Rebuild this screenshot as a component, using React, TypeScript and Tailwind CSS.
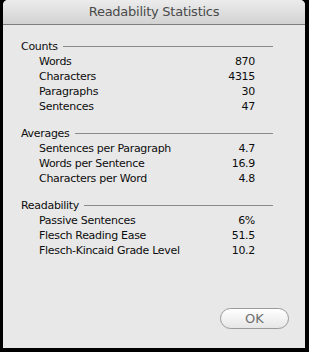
import React from 'react';

type Row = { label: string; value: string };

const sections: { title: string; rows: Row[] }[] = [
    {
        title: 'Counts',
        rows: [
            { label: 'Words', value: '870' },
            { label: 'Characters', value: '4315' },
            { label: 'Paragraphs', value: '30' },
            { label: 'Sentences', value: '47' },
        ],
    },
    {
        title: 'Averages',
        rows: [
            { label: 'Sentences per Paragraph', value: '4.7' },
            { label: 'Words per Sentence', value: '16.9' },
            { label: 'Characters per Word', value: '4.8' },
        ],
    },
    {
        title: 'Readability',
        rows: [
            { label: 'Passive Sentences', value: '6%' },
            { label: 'Flesch Reading Ease', value: '51.5' },
            { label: 'Flesch-Kincaid Grade Level', value: '10.2' },
        ],
    },
];

const Section = ({ title, rows }: { title: string; rows: Row[] }) => (
    <div className="flex flex-col">
        <div className="flex items-center h-[15px] leading-[15px]">
            <span className="text-[#0d0d0d]">{title}</span>
            <div className="flex-1 h-px bg-[#8a8a8a] ml-[5px]" />
        </div>
        {rows.map((r) => (
            <div key={r.label} className="flex h-[15px] leading-[15px] pl-[18px] pr-[18px]">
                <span className="flex-1 text-[#0d0d0d]">{r.label}</span>
                <span className="text-[#0d0d0d]">{r.value}</span>
            </div>
        ))}
    </div>
);

export default function App() {
    return (
        <div className="w-[309px] h-[352px] bg-black pl-[3px]" style={{ fontFamily: '"DejaVu Sans", "Liberation Sans", sans-serif' }}>
            <div className="w-[302px] h-[348px] bg-[#e8e8e8] rounded-t-[5px] flex flex-col overflow-hidden">
                <div className="h-[25px] border-b border-[#7c7c7c] bg-gradient-to-b from-[#ececec] to-[#d2d2d2] flex items-center justify-center">
                    <span className="text-[13px] tracking-[-0.25px] text-[#4a4a4a]">Readability Statistics</span>
                </div>
                <div className="flex flex-col gap-[12px] pt-[14px] pl-[18px] pr-[32px] text-[11px] tracking-[-0.3px]">
                    {sections.map((s) => (
                        <Section key={s.title} title={s.title} rows={s.rows} />
                    ))}
                </div>
                <div className="flex-1" />
                <div className="flex justify-end pr-[16px] pb-[19px]">
                    <button className="w-[69px] h-[21px] rounded-full border border-[#9a9a9a] bg-gradient-to-b from-[#ffffff] to-[#e6e6e6] text-[13px] leading-[19px] text-[#6e6e6e]">
                        OK
                    </button>
                </div>
            </div>
        </div>
    );
}
